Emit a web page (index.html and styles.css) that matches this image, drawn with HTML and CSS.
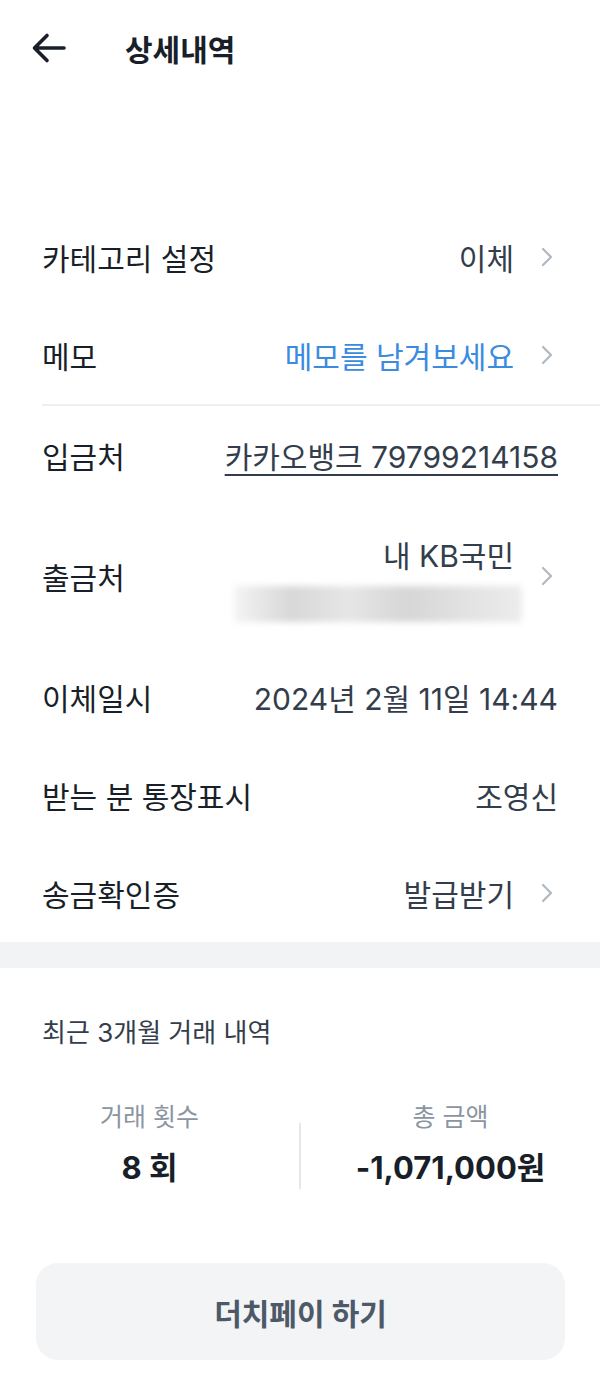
FILE: index.html
```html
<!DOCTYPE html>
<html lang="ko">
  <head>
    <meta charset="utf-8">
    <title>상세내역</title>
    <link rel="stylesheet" href="styles.css">
  </head>
  <body>
  <div id="header">
    <svg class="back" width="36" height="32" viewBox="0 0 36 32"><path d="M33 16H4M16 3.5L3.5 16 16 28.5" fill="none" stroke="#191f28" stroke-width="3.6" stroke-linecap="round" stroke-linejoin="round"/></svg>
    <span id="title">상세내역</span>
  </div>

  <div id="details">
    <div class="row">
      <span class="label">카테고리 설정</span>
      <span class="value">이체</span>
      <svg class="chev" width="14" height="20" viewBox="0 0 14 20"><path d="M3 2l8 8-8 8" fill="none" stroke="#b0b8c1" stroke-width="2.2" stroke-linecap="round" stroke-linejoin="round"/></svg>
    </div>
    <div class="row">
      <span class="label">메모</span>
      <span class="value blue">메모를 남겨보세요</span>
      <svg class="chev" width="14" height="20" viewBox="0 0 14 20"><path d="M3 2l8 8-8 8" fill="none" stroke="#b0b8c1" stroke-width="2.2" stroke-linecap="round" stroke-linejoin="round"/></svg>
    </div>
    <div class="divider"></div>
    <div class="row">
      <span class="label">입금처</span>
      <span class="value link">카카오뱅크 79799214158</span>
    </div>
    <div class="row tall">
      <span class="label">출금처</span>
      <div class="value stack">
        <span>내 KB국민</span>
        <div class="masked"></div>
      </div>
      <svg class="chev" width="14" height="20" viewBox="0 0 14 20"><path d="M3 2l8 8-8 8" fill="none" stroke="#b0b8c1" stroke-width="2.2" stroke-linecap="round" stroke-linejoin="round"/></svg>
    </div>
    <div class="row">
      <span class="label">이체일시</span>
      <span class="value">2024년 2월 11일 14:44</span>
    </div>
    <div class="row">
      <span class="label">받는 분 통장표시</span>
      <span class="value">조영신</span>
    </div>
    <div class="row">
      <span class="label">송금확인증</span>
      <span class="value">발급받기</span>
      <svg class="chev" width="14" height="20" viewBox="0 0 14 20"><path d="M3 2l8 8-8 8" fill="none" stroke="#b0b8c1" stroke-width="2.2" stroke-linecap="round" stroke-linejoin="round"/></svg>
    </div>
  </div>

  <div class="band"></div>

  <div id="summary">
    <div id="summaryTitle">최근 3개월 거래 내역</div>
    <div class="stats">
      <div class="stat">
        <span class="statLabel">거래 횟수</span>
        <span class="statValue">8 회</span>
      </div>
      <div class="vline"></div>
      <div class="stat">
        <span class="statLabel">총 금액</span>
        <span class="statValue">-1,071,000원</span>
      </div>
    </div>
  </div>

  <div id="buttonWrap">
    <div id="dutch">더치페이 하기</div>
  </div>
  </body>
</html>
```

FILE: styles.css
```css
body {
  margin: 0;
  background: white;
  color: #191f28;
  font-family: "Inter", "Noto Sans CJK KR", sans-serif;
  }
#header {
  height: 96px;
  display: flex;
  align-items: center;
  padding-left: 31px;
  }
.back {
  margin-right: 58px;
  }
#title {
  font-size: 30px;
  font-weight: 700;
  color: #191f28;
  }
#details {
  padding-top: 112px;
  }
.row {
  display: flex;
  align-items: center;
  height: 98px;
  padding: 0 42px;
  font-size: 30px;
  }
.row.tall {
  height: 144px;
  }
.label {
  flex: 1;
  color: #191f28;
  }
.value {
  color: #333d4b;
  text-align: right;
  }
.blue {
  color: #3b8be0;
  }
.link {
  text-decoration: underline;
  text-underline-offset: 6px;
  text-decoration-thickness: 2px;
  }
.chev {
  margin-left: 26px;
  margin-right: 4px;
  }
.stack {
  display: flex;
  flex-direction: column;
  align-items: flex-end;
  gap: 10px;
  padding-top: 2px;
  }
.masked {
  width: 288px;
  height: 36px;
  margin-right: -8px;
  background: linear-gradient(90deg, #f4f4f4 0%, #d8d8d8 20%, #e6e6e6 40%, #d6d6d6 60%, #e2e2e2 80%, #ececec 100%);
  filter: blur(3px);
  }
.divider {
  height: 2px;
  margin-left: 42px;
  background: #eeeff1;
  }
.band {
  height: 26px;
  background: #f2f3f5;
  }
#summary {
  padding: 44px 42px 0;
  }
#summaryTitle {
  font-size: 26px;
  color: #333d4b;
  }
.stats {
  display: flex;
  align-items: center;
  margin: 46px -42px 0;
  }
.stat {
  flex: 1;
  display: flex;
  flex-direction: column;
  align-items: center;
  }
.statLabel {
  font-size: 25px;
  color: #8b95a1;
  }
.statValue {
  margin-top: 10px;
  font-size: 31px;
  font-weight: 700;
  color: #191f28;
  }
.vline {
  width: 2px;
  height: 66px;
  margin-top: 28px;
  background: #e5e8eb;
  }
#buttonWrap {
  padding: 74px 35px 0 36px;
  }
#dutch {
  height: 97px;
  border-radius: 22px;
  background: #f2f4f6;
  display: flex;
  align-items: center;
  justify-content: center;
  font-size: 30px;
  font-weight: 700;
  color: #4e5968;
  }
```
